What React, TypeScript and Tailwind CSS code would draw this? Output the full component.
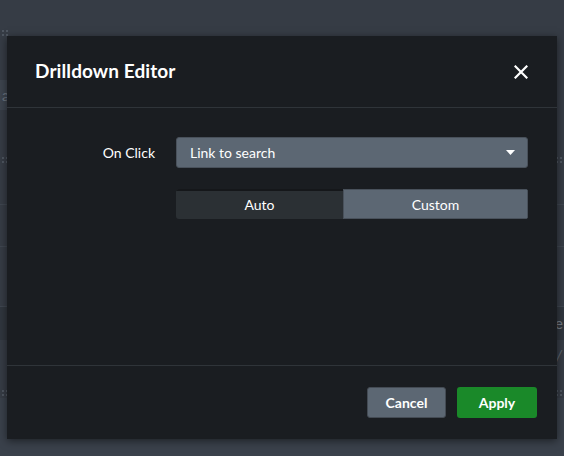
import React from "react";

function Dots() {
  return (
    <div className="grid grid-cols-2 gap-[2px] w-[6px]">
      {Array.from({ length: 4 }).map((_, i) => (
        <div key={i} className="w-[2px] h-[2px] bg-[#4e5660]" />
      ))}
    </div>
  );
}

export default function App() {
  return (
    <div
      className="relative w-[564px] h-[456px] overflow-hidden bg-[#363c45]"
      style={{ fontFamily: "Lato, 'Open Sans', sans-serif" }}
    >
      {/* background dashboard */}
      <div className="flex flex-col h-full">
        <div className="h-[38px] flex items-end px-[2px] pb-[2px]">
          <Dots />
        </div>
        <div className="h-[42px]" />
        <div className="h-[30px] w-[40px] bg-[#3d444e] flex items-center pl-[2px] text-[#6b737d] text-[15px]">
          a
        </div>
        <div className="h-[55px] flex items-end px-[2px] pb-[2px] justify-between">
          <Dots />
          <Dots />
        </div>
        <div className="h-[40px] border-b border-[#3f4650]" />
        <div className="h-[42px] border-b border-[#3f4650]" />
        <div className="h-[60px] border-b border-[#3f4650]" />
        <div className="h-[33px] bg-[#30363e] flex items-center justify-end text-[#747c86] text-[15px]">
          <span className="pr-[1px]">te</span>
        </div>
        <div className="h-[30px] flex items-center justify-end text-[#5f6771] text-[15px] italic">
          <span className="pr-[2px]">/</span>
        </div>
        <div className="h-[28px] flex items-end justify-between px-[2px] pb-[2px]">
          <Dots />
          <Dots />
        </div>
        <div className="flex-1 bg-[#3a414b]" />
      </div>

      {/* modal */}
      <div className="absolute left-[7px] top-[36px] w-[550px] h-[403px] bg-[#1a1d21] flex flex-col shadow-[0_2px_8px_rgba(0,0,0,0.5)]">
        <div className="h-[72px] flex items-center justify-between pl-[28px] pr-[28px] border-b border-[#2f3439]">
          <h1 className="text-white text-[19px] font-bold tracking-[0.1px]">Drilldown Editor</h1>
          <svg width="14" height="14" viewBox="0 0 14 14" className="mr-[1px]">
            <path d="M1.5 1.5 L12.5 12.5 M12.5 1.5 L1.5 12.5" stroke="white" strokeWidth="2.2" strokeLinecap="square" />
          </svg>
        </div>

        <div className="flex-1 pt-[29px] pr-[29px]">
          <div className="flex items-center gap-[21px]">
            <label className="w-[148px] text-right text-white text-[14px]">On Click</label>
            <div className="flex-1 h-[31px] rounded-[3px] bg-[#5c6773] border border-[#49515b] flex items-center justify-between pl-[13px] pr-[12px] text-white text-[14px]">
              <span>Link to search</span>
              <svg width="9" height="5" viewBox="0 0 9 5">
                <path d="M0 0 L9 0 L4.5 5 Z" fill="white" />
              </svg>
            </div>
          </div>
          <div className="flex mt-[21px] ml-[169px] h-[30px] rounded-[3px] overflow-hidden">
            <div className="w-[167px] bg-[#2b3034] shadow-[inset_0_2px_0_#15171a] flex items-center justify-center text-white text-[14px]">
              Auto
            </div>
            <div className="flex-1 bg-[#5c6773] border border-[#49515b] flex items-center justify-center text-white text-[14px]">
              Custom
            </div>
          </div>
        </div>

        <div className="h-[74px] border-t border-[#2f3439] flex items-center justify-end gap-[11px] pr-[20px]">
          <button className="w-[79px] h-[31px] rounded-[3px] bg-[#5c6773] border border-[#444b54] text-white text-[14px] font-bold">
            Cancel
          </button>
          <button className="w-[80px] h-[31px] rounded-[3px] bg-[#1a8929] text-white text-[14px] font-bold">
            Apply
          </button>
        </div>
      </div>
    </div>
  );
}
